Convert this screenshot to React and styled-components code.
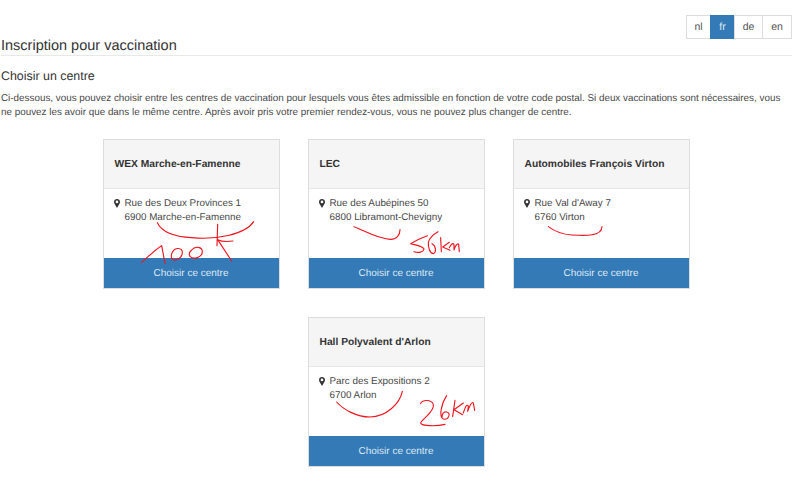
import React from 'react'
import styled, { createGlobalStyle } from 'styled-components'

const Global = createGlobalStyle`
  html, body {
    margin: 0;
    padding: 0;
    background: #fff;
    color: #333;
    font-family: "Liberation Sans", Arial, sans-serif;
    text-rendering: geometricPrecision;
  }
`

const Page = styled.div`
  width: 800px;
  height: 491px;
  box-sizing: border-box;
  padding: 15px 8px 0 1px;
  overflow: hidden;
`

const LangBar = styled.div`
  display: flex;
  justify-content: flex-end;
  height: 24px;
`

const LangButton = styled.a`
  display: flex;
  align-items: center;
  justify-content: center;
  width: ${p => p.$w}px;
  box-sizing: border-box;
  border: 1px solid #ddd;
  margin-left: -1px;
  font-size: 10.5px;
  background: ${p => (p.$active ? '#337ab7' : '#fff')};
  color: ${p => (p.$active ? '#dfe9f3' : '#555')};
  border-color: ${p => (p.$active ? '#337ab7' : '#ddd')};
`

const Title = styled.h1`
  margin: 0;
  height: 16px;
  border-bottom: 1px solid #e8e8e8;
  font-size: 14.5px;
  line-height: 14px;
  font-weight: 400;
`

const SubTitle = styled.h2`
  margin: 13px 0 0;
  font-size: 12.4px;
  line-height: 14px;
  font-weight: 400;
`

const Intro = styled.p`
  margin: 9px 0 0;
  font-size: 9.87px;
  line-height: 14px;
  color: #484848;
`

const Cards = styled.div`
  display: flex;
  flex-wrap: wrap;
  justify-content: center;
  gap: 28px;
  width: 690px;
  margin: 19px 0 0 50px;
`

const Card = styled.div`
  position: relative;
  width: 177px;
  height: 150px;
  box-sizing: border-box;
  border: 1px solid #ddd;
  display: flex;
  flex-direction: column;
  background: #fff;
`

const CardHead = styled.div`
  height: 49px;
  flex: none;
  box-sizing: border-box;
  display: flex;
  align-items: center;
  padding: 0 10px 0 11px;
  background: #f5f5f5;
  border-bottom: 1px solid #e6e6e6;
  font-size: 10.25px;
  font-weight: 700;
`

const CardBody = styled.div`
  flex: 1;
  display: flex;
  gap: 5px;
  padding: 8px 10px 0;
  font-size: 9.85px;
  line-height: 14px;
  color: #484848;
`

const Pin = styled.svg`
  flex: none;
  width: 6px;
  height: 9px;
  margin-top: 2px;
`

const Choose = styled.a`
  height: 30px;
  flex: none;
  box-sizing: border-box;
  padding-top: 1px;
  display: flex;
  align-items: center;
  justify-content: center;
  background: #337ab7;
  color: #dfe9f3;
  font-size: 10px;
`

const Scribble = styled.svg`
  position: absolute;
  left: -9px;
  top: -5px;
  width: 200px;
  height: 160px;
  pointer-events: none;
  fill: none;
  stroke: #f0141e;
  stroke-width: 3.4;
  stroke-linecap: round;
  stroke-linejoin: round;
`

const centres = [
  {
    name: 'WEX Marche-en-Famenne',
    street: 'Rue des Deux Provinces 1',
    city: '6900 Marche-en-Famenne',
    marks: [
      'M187 263C200 290 240 305 290 308C360 315 450 300 476 260',
      'M368 268L366 332M414 318C400 320 380 320 368 314L410 378',
      'M140 382C160 365 185 340 200 332L210 385',
      'M232 352C240 335 262 338 262 352C262 372 235 382 230 370C227 362 230 356 232 352Z',
      'M290 345C300 332 322 335 322 350C322 368 295 375 285 364C280 356 284 350 290 345Z',
    ],
  },
  {
    name: 'LEC',
    street: 'Rue des Aubépines 50',
    city: '6800 Libramont-Chevigny',
    marks: [
      'M162 275C190 285 230 310 270 313C290 314 300 300 300 284',
      'M382 302C365 308 345 318 332 326C345 330 368 332 372 342C370 352 355 354 342 350',
      'M414 290C400 298 388 310 385 322C384 338 390 356 400 356C410 352 408 332 396 326',
      'M422 308L424 350M448 322L428 336L450 346',
      'M448 338C452 330 458 322 462 328L462 345C465 335 472 322 476 328L478 350',
    ],
  },
  {
    name: 'Automobiles François Virton',
    street: "Rue Val d'Away 7",
    city: '6760 Virton',
    marks: ['M130 275C150 290 170 298 200 300C240 302 290 305 291 275'],
  },
  {
    name: "Hall Polyvalent d'Arlon",
    street: 'Parc des Expositions 2',
    city: '6700 Arlon',
    marks: [
      'M110 267C130 290 170 312 210 312C260 312 300 270 307 235',
      'M362 272C365 260 395 258 400 275C405 295 365 320 362 330C365 340 410 340 435 334',
      'M440 248C425 270 415 310 430 318C445 322 455 300 440 297C430 295 425 305 427 310',
      'M465 262L458 310M490 270L462 290L488 305',
      'M490 300C495 285 500 270 505 280L503 295C508 280 515 265 520 270L524 292',
    ],
  },
]

const langs = [
  { code: 'nl', w: 25 },
  { code: 'fr', w: 25, active: true },
  { code: 'de', w: 29 },
  { code: 'en', w: 30 },
]

const App = () => (
  <Page>
    <Global />
    <LangBar>
      {langs.map(l => (
        <LangButton key={l.code} $w={l.w} $active={l.active}>{l.code}</LangButton>
      ))}
    </LangBar>
    <Title>Inscription pour vaccination</Title>
    <SubTitle>Choisir un centre</SubTitle>
    <Intro>
      Ci-dessous, vous pouvez choisir entre les centres de vaccination pour lesquels vous êtes admissible en fonction de votre code postal. Si deux vaccinations sont nécessaires, vous ne pouvez les avoir que dans le même centre. Après avoir pris votre premier rendez-vous, vous ne pouvez plus changer de centre.
    </Intro>
    <Cards>
      {centres.map(c => (
        <Card key={c.name}>
          <CardHead>{c.name}</CardHead>
          <CardBody>
            <Pin viewBox="0 0 12 18">
              <path fillRule="evenodd" fill="#333" d="M6 0C2.7 0 0 2.6 0 5.9C0 9.5 4 13.5 6 18C8 13.5 12 9.5 12 5.9C12 2.6 9.3 0 6 0ZM6 3.2A2.7 2.7 0 1 1 6 8.6A2.7 2.7 0 1 1 6 3.2Z" />
            </Pin>
            <div>{c.street}<br />{c.city}</div>
          </CardBody>
          <Choose>Choisir ce centre</Choose>
          <Scribble viewBox="0 0 600 480">
            {c.marks.map(d => <path key={d} d={d} />)}
          </Scribble>
        </Card>
      ))}
    </Cards>
  </Page>
)

export default App
